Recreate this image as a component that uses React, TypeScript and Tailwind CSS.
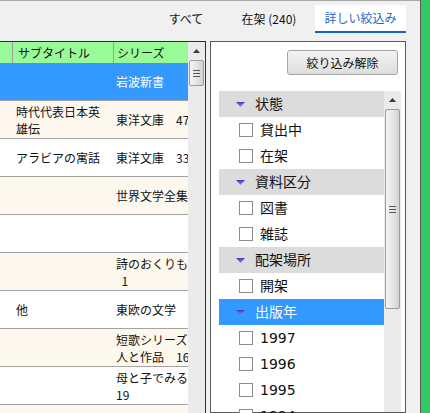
import React from "react";

type Row = { sub: string[]; series: string[]; tone: "sel" | "cream" | "white" };

const rows: Row[] = [
  { sub: [], series: ["岩波新書"], tone: "sel" },
  { sub: ["時代代表日本英", "雄伝"], series: ["東洋文庫　47"], tone: "cream" },
  { sub: ["アラビアの寓話"], series: ["東洋文庫　33"], tone: "white" },
  { sub: [], series: ["世界文学全集"], tone: "cream" },
  { sub: [], series: [], tone: "white" },
  { sub: [], series: ["詩のおくりもの", "\u00a0 1"], tone: "cream" },
  { sub: ["他"], series: ["東欧の文学"], tone: "white" },
  { sub: [], series: ["短歌シリーズ", "人と作品　16"], tone: "cream" },
  { sub: [], series: ["母と子でみる", "19"], tone: "white" },
  { sub: [], series: ["明治文学全集"], tone: "cream" },
];

type Filter = { kind: "group" | "item"; label: string; selected?: boolean };

const filters: Filter[] = [
  { kind: "group", label: "状態" },
  { kind: "item", label: "貸出中" },
  { kind: "item", label: "在架" },
  { kind: "group", label: "資料区分" },
  { kind: "item", label: "図書" },
  { kind: "item", label: "雑誌" },
  { kind: "group", label: "配架場所" },
  { kind: "item", label: "開架" },
  { kind: "group", label: "出版年", selected: true },
  { kind: "item", label: "1997" },
  { kind: "item", label: "1996" },
  { kind: "item", label: "1995" },
  { kind: "item", label: "1994" },
];

function ScrollBar({ thumbHeight }: { thumbHeight: string }) {
  return (
    <div className="w-[17px] shrink-0 bg-[#ebebeb] flex flex-col items-center">
      <div className="h-[17px] w-full flex items-center justify-center">
        <svg width="7" height="4" viewBox="0 0 7 4">
          <polygon points="3.5,0 7,4 0,4" fill="#3a3a3a" />
        </svg>
      </div>
      <div
        className={`mt-[1px] ${thumbHeight} w-[15px] rounded-[2px] border border-[#9c9c9c] bg-gradient-to-r from-[#f4f4f4] via-[#e6e6e6] to-[#d2d2d2] flex flex-col items-center justify-center gap-[2px]`}
      >
        <div className="w-[7px] h-px bg-[#5a5a5a]" />
        <div className="w-[7px] h-px bg-[#5a5a5a]" />
        <div className="w-[7px] h-px bg-[#5a5a5a]" />
      </div>
    </div>
  );
}

function Caret() {
  return (
    <svg width="9" height="5" viewBox="0 0 9 5">
      <defs>
        <linearGradient id="cg" x1="0" y1="0" x2="0" y2="1">
          <stop offset="0" stopColor="#3c3cb8" />
          <stop offset="1" stopColor="#8a8ae0" />
        </linearGradient>
      </defs>
      <polygon points="0,0 9,0 4.5,5" fill="url(#cg)" />
    </svg>
  );
}

export default function App() {
  return (
    <div
      className="w-[430px] h-[413px] flex overflow-hidden bg-[#f0f0f0] text-[#111]"
      style={{ fontFamily: '"Noto Sans CJK JP", "Noto Sans", sans-serif' }}
    >
      <div className="w-[421px] shrink-0 flex flex-col border-r border-[#5c5c5c]">
        {/* tabs */}
        <div className="h-[41px] shrink-0 border-t border-[#a8a8a8] flex justify-end items-start pt-[4px] pr-[14px] text-[12px]">
          <div className="w-[52px] h-[28px] flex items-center justify-center">すべて</div>
          <div className="w-[74px] h-[28px] ml-[20px] flex items-center justify-center">在架 (240)</div>
          <div className="w-[91px] h-[28px] ml-[9px] bg-white border-b-2 border-[#1565c0] text-[#1b6ad0] flex items-center justify-center">
            詳しい絞込み
          </div>
        </div>

        <div className="flex flex-1 min-h-0">
          {/* result table */}
          <div className="w-[206px] shrink-0 flex border-t border-r border-[#2e2e2e] bg-white overflow-hidden">
            <div className="w-[188px] shrink-0 flex flex-col overflow-hidden text-[12px]">
              <div className="h-[21px] shrink-0 bg-[#98fb98] flex">
                <div className="w-[13px] border-r border-[#a0a0a0]" />
                <div className="w-[101px] border-r border-[#a0a0a0] pl-[5px] flex items-center">サブタイトル</div>
                <div className="flex-1 pl-[3px] flex items-center">シリーズ</div>
              </div>
              {rows.map((r, i) => (
                <div
                  key={i}
                  className={`h-[38px] shrink-0 flex border-b border-[#a3a3a3] leading-[17px] ${
                    r.tone === "sel" ? "bg-[#3399ff] text-white" : r.tone === "cream" ? "bg-[#fdf8ee]" : "bg-white"
                  }`}
                >
                  <div className="w-[16px] shrink-0" />
                  <div className="w-[100px] shrink-0 flex flex-col justify-center">
                    {r.sub.map((s) => (
                      <span key={s}>{s}</span>
                    ))}
                  </div>
                  <div className="flex-1 flex flex-col justify-center whitespace-nowrap">
                    {r.series.map((s) => (
                      <span key={s}>{s}</span>
                    ))}
                  </div>
                </div>
              ))}
            </div>
            <ScrollBar thumbHeight="h-[26px]" />
          </div>

          {/* filter panel */}
          <div className="w-[196px] shrink-0 ml-[4px] border border-[#5a5a5a] bg-white flex flex-col pt-[8px] pl-[8px] pr-[4px]">
            <div className="flex justify-end pr-[3px]">
              <button className="w-[111px] h-[25px] rounded-[3px] border border-[#a5a5a5] bg-gradient-to-b from-[#f3f3f3] to-[#dedede] text-[12px] text-[#111]">
                絞り込み解除
              </button>
            </div>
            <div
              className="mt-[16px] flex flex-1 min-h-0 text-[14px]"
              style={{ fontFamily: '"DejaVu Sans", "Noto Sans CJK JP", sans-serif' }}
            >
              <div className="w-[165px] shrink-0 flex flex-col">
                {filters.map((f) =>
                  f.kind === "group" ? (
                    <div
                      key={f.label}
                      className={`h-[26px] shrink-0 flex items-center pl-[17px] gap-[10px] ${
                        f.selected ? "bg-[#3399ff] text-white" : "bg-[#dcdcdc]"
                      }`}
                    >
                      <Caret />
                      <span>{f.label}</span>
                    </div>
                  ) : (
                    <div key={f.label} className="h-[26px] shrink-0 flex items-center pl-[20px] gap-[7px]">
                      <div className="w-[14px] h-[14px] border border-[#8c8c8c] bg-white" />
                      <span>{f.label}</span>
                    </div>
                  )
                )}
              </div>
              <ScrollBar thumbHeight="h-[200px]" />
            </div>
          </div>
        </div>
      </div>
      <div className="flex-1 bg-[#33c866]" />
    </div>
  );
}
